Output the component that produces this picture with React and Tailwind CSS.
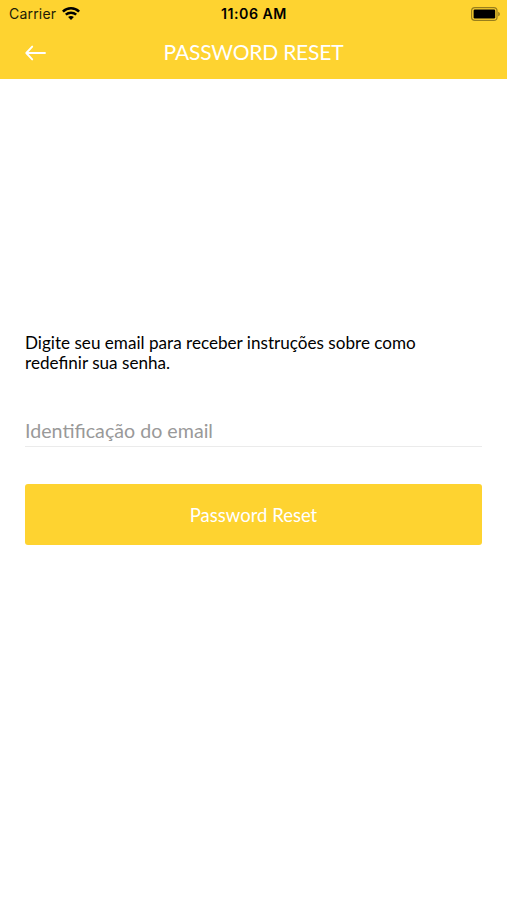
import { useState } from "react";

function WifiIcon() {
  return (
    <svg width="18" height="14" viewBox="0 0 18 14" fill="none" aria-hidden="true">
      <path d="M.9 4.6C5.4.2 12.6.2 17.1 4.6" stroke="#000" strokeWidth="2.6" />
      <path d="M3.8 7.7c2.9-2.7 7.5-2.7 10.4 0" stroke="#000" strokeWidth="2.4" />
      <path d="M6.1 10C7.8 8.5 10.2 8.5 11.9 10L9 12.9Z" fill="#000" />
    </svg>
  );
}

function BatteryIcon() {
  return (
    <svg width="30" height="14" viewBox="0 0 30 14" fill="none" aria-hidden="true">
      <rect x=".6" y=".6" width="25.4" height="12.8" rx="3.2" stroke="#000" strokeOpacity=".4" strokeWidth="1.2" />
      <rect x="2.6" y="2.5" width="21.6" height="9" rx="1.2" fill="#000" />
      <path d="M27.2 4.7c2.2.8 2.2 3.8 0 4.6Z" fill="#000" fillOpacity=".4" />
    </svg>
  );
}

function BackArrow() {
  return (
    <svg width="21" height="16" viewBox="0 0 21 16" fill="none" aria-hidden="true">
      <path
        d="M20 8H1.5M7.2 1.6 1.3 8 7.2 14.4"
        stroke="#fff"
        strokeWidth="1.9"
        strokeLinecap="round"
        strokeLinejoin="round"
      />
    </svg>
  );
}

export default function App() {
  const [email, setEmail] = useState("");

  return (
    <div className="flex h-[900px] w-[507px] flex-col bg-white font-['Lato',sans-serif]">
      <header className="h-[79px] bg-[#fed330]">
        <div className="grid h-[27px] grid-cols-[1fr_auto_1fr] items-center pl-[9px] pr-[6px] font-['Inter',sans-serif] text-black">
          <div className="flex items-center gap-[6px] text-[14px] tracking-[0.2px] text-[#211b06]">
            <span>Carrier</span>
            <WifiIcon />
          </div>
          <span className="pr-[2px] text-center text-[14.2px] font-semibold tracking-[0.5px]">
            11:06 AM
          </span>
          <div className="flex justify-end">
            <BatteryIcon />
          </div>
        </div>
        <div className="grid h-[51px] grid-cols-[1fr_auto_1fr] items-center px-[25px]">
          <button type="button" aria-label="Back">
            <BackArrow />
          </button>
          <h1 className="pb-[3px] text-[21px] leading-none tracking-[-0.2px] text-white">
            PASSWORD RESET
          </h1>
        </div>
      </header>

      <form
        className="flex flex-col px-[25px] pt-[254px]"
        onSubmit={(event) => event.preventDefault()}
      >
        <p className="h-[41px] text-[17.12px] leading-[20px] text-black">
          Digite seu email para receber instruções sobre como
          <br />
          redefinir sua senha.
        </p>
        <input
          type="email"
          value={email}
          onChange={(event) => setEmail(event.target.value)}
          placeholder="Identificação do email"
          className="mt-[41px] h-[32px] border-b border-[#ebebeb] text-[19.65px] outline-none placeholder:text-[#999]"
        />
        <button
          type="submit"
          className="mt-[37px] h-[61px] rounded-[3px] bg-[#fed330] pt-[2px] text-[18.5px] text-white"
        >
          Password Reset
        </button>
      </form>
    </div>
  );
}
